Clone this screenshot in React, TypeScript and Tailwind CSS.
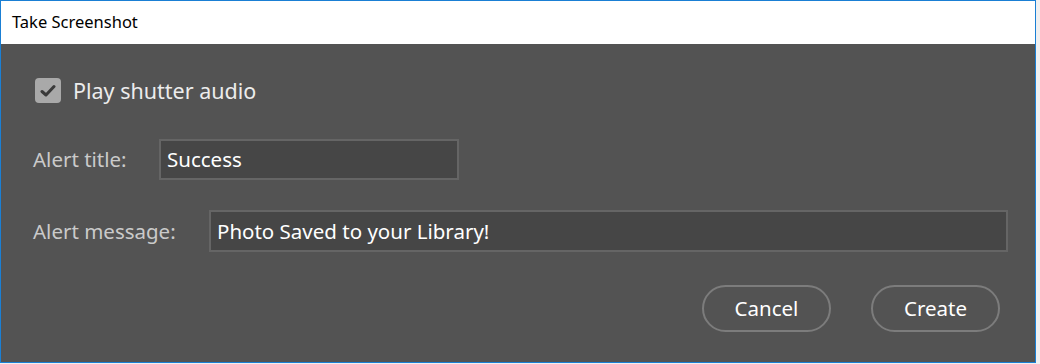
import React from "react";

export default function App() {
  const font = { fontFamily: '"Segoe UI", "Noto Sans", sans-serif' };
  return (
    <div className="w-[1040px] h-[364px] bg-[#f0f0f0]" style={font}>
      <div className="w-[1036px] h-[363px] border border-[#1a7fd4] flex flex-col bg-[#535353]">
        <div className="h-[43px] bg-white flex items-center pl-[11px] text-[16.5px] text-black shrink-0">
          Take Screenshot
        </div>
        <div className="flex flex-col pl-[32px] pr-[27px]">
          <div className="flex items-center mt-[34px] pl-[2px]">
            <div className="w-[26px] h-[25px] rounded-[4px] bg-[#a9a9a9] flex items-center justify-center">
              <svg width="16" height="14" viewBox="0 0 16 14">
                <path d="M2 7.5 L6 11 L14 2.5" stroke="#3a3a3a" strokeWidth="3" fill="none" strokeLinecap="round" strokeLinejoin="round" />
              </svg>
            </div>
            <span className="ml-[12px] text-[21.5px] text-[#ececec] leading-none">Play shutter audio</span>
          </div>
          <div className="flex items-center mt-[36px]">
            <span className="w-[126px] text-[20.5px] text-[#cacaca]">Alert title:</span>
            <div className="w-[300px] h-[41px] border-2 border-[#656565] bg-[#464646] flex items-center pl-[6px] text-[20.5px] text-white">
              Success
            </div>
          </div>
          <div className="flex items-center mt-[30px]">
            <span className="w-[176px] text-[20.5px] text-[#cacaca]">Alert message:</span>
            <div className="flex-1 h-[42px] border-2 border-[#656565] bg-[#464646] flex items-center pl-[6px] text-[20.5px] text-white">
              Photo Saved to your Library!
            </div>
          </div>
          <div className="flex justify-end gap-[40px] mt-[33px] pr-[8px]">
            <button className="w-[129px] h-[47px] rounded-full border-2 border-[#7c7c7c] text-[20.5px] text-white">Cancel</button>
            <button className="w-[129px] h-[47px] rounded-full border-2 border-[#7c7c7c] text-[20.5px] text-white">Create</button>
          </div>
        </div>
      </div>
    </div>
  );
}
